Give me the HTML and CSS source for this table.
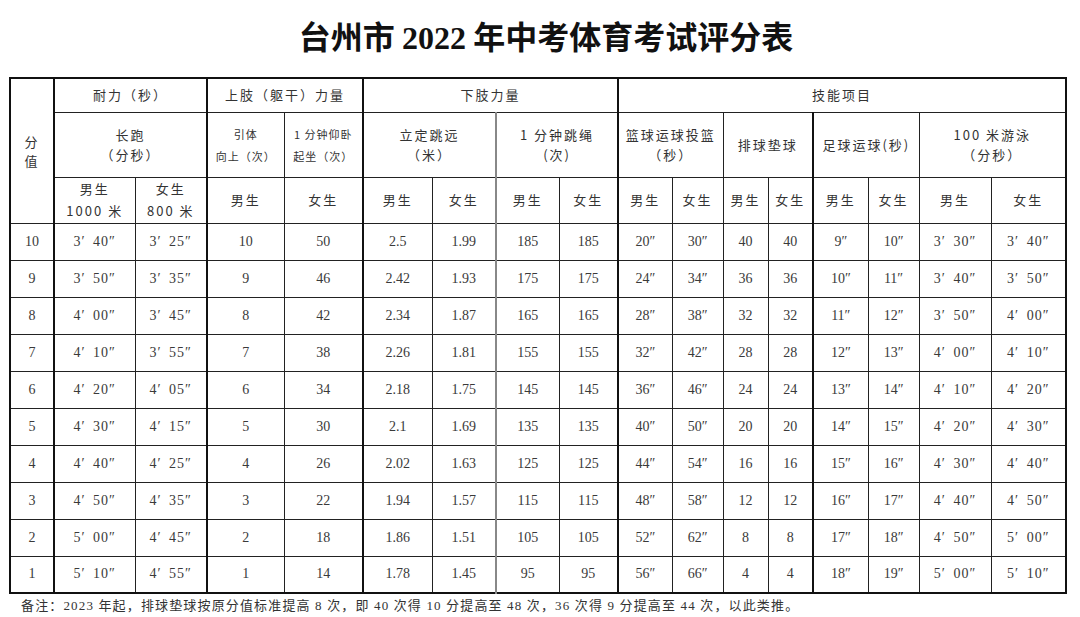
FILE: index.html
```html
<!DOCTYPE html>
<html lang="zh-CN">
<head>
<meta charset="utf-8">
<title>台州市2022年中考体育考试评分表</title>
<link rel="stylesheet" href="styles.css">
</head>
<body>
<div class="page">
  <h1 class="title">台州市 <span class="num">2022</span> 年中考体育考试评分表</h1>
  <table class="score">
    <colgroup>
      <col class="c0"><col class="c1 tk"><col class="c2"><col class="c3 tk"><col class="c4">
      <col class="c5 tk"><col class="c6"><col class="c7 gr"><col class="c8"><col class="c9 tk">
      <col class="c10"><col class="c11"><col class="c12"><col class="c13 tk"><col class="c14">
      <col class="c15"><col class="c16">
    </colgroup>
    <thead>
      <tr class="h1">
        <th rowspan="3" class="fz">分<br>值</th>
        <th colspan="2">耐力（秒）</th>
        <th colspan="2">上肢（躯干）力量</th>
        <th colspan="4">下肢力量</th>
        <th colspan="8">技能项目</th>
      </tr>
      <tr class="h2">
        <th colspan="2">长跑<br>（分秒）</th>
        <th class="sm">引体<br>向上（次）</th>
        <th class="sm">1 分钟仰卧<br>起坐（次）</th>
        <th colspan="2">立定跳远<br>（米）</th>
        <th colspan="2">1 分钟跳绳<br>(次)</th>
        <th colspan="2">篮球运球投篮<br>（秒）</th>
        <th colspan="2">排球垫球</th>
        <th colspan="2">足球运球(秒)</th>
        <th colspan="2">100 米游泳<br>（分秒）</th>
      </tr>
      <tr class="h3">
        <th class="two">男生<br>1000 米</th>
        <th class="two">女生<br>800 米</th>
        <th>男生</th><th>女生</th>
        <th>男生</th><th>女生</th>
        <th>男生</th><th>女生</th>
        <th>男生</th><th>女生</th>
        <th>男生</th><th>女生</th>
        <th>男生</th><th>女生</th>
        <th>男生</th><th>女生</th>
      </tr>
    </thead>
    <tbody>
      <tr><td>10</td><td class="t">3′ 40″</td><td class="t">3′ 25″</td><td>10</td><td>50</td><td>2.5</td><td>1.99</td><td>185</td><td>185</td><td>20″</td><td>30″</td><td>40</td><td>40</td><td>9″</td><td>10″</td><td class="t">3′ 30″</td><td class="t">3′ 40″</td></tr>
      <tr><td>9</td><td class="t">3′ 50″</td><td class="t">3′ 35″</td><td>9</td><td>46</td><td>2.42</td><td>1.93</td><td>175</td><td>175</td><td>24″</td><td>34″</td><td>36</td><td>36</td><td>10″</td><td>11″</td><td class="t">3′ 40″</td><td class="t">3′ 50″</td></tr>
      <tr><td>8</td><td class="t">4′ 00″</td><td class="t">3′ 45″</td><td>8</td><td>42</td><td>2.34</td><td>1.87</td><td>165</td><td>165</td><td>28″</td><td>38″</td><td>32</td><td>32</td><td>11″</td><td>12″</td><td class="t">3′ 50″</td><td class="t">4′ 00″</td></tr>
      <tr><td>7</td><td class="t">4′ 10″</td><td class="t">3′ 55″</td><td>7</td><td>38</td><td>2.26</td><td>1.81</td><td>155</td><td>155</td><td>32″</td><td>42″</td><td>28</td><td>28</td><td>12″</td><td>13″</td><td class="t">4′ 00″</td><td class="t">4′ 10″</td></tr>
      <tr><td>6</td><td class="t">4′ 20″</td><td class="t">4′ 05″</td><td>6</td><td>34</td><td>2.18</td><td>1.75</td><td>145</td><td>145</td><td>36″</td><td>46″</td><td>24</td><td>24</td><td>13″</td><td>14″</td><td class="t">4′ 10″</td><td class="t">4′ 20″</td></tr>
      <tr><td>5</td><td class="t">4′ 30″</td><td class="t">4′ 15″</td><td>5</td><td>30</td><td>2.1</td><td>1.69</td><td>135</td><td>135</td><td>40″</td><td>50″</td><td>20</td><td>20</td><td>14″</td><td>15″</td><td class="t">4′ 20″</td><td class="t">4′ 30″</td></tr>
      <tr><td>4</td><td class="t">4′ 40″</td><td class="t">4′ 25″</td><td>4</td><td>26</td><td>2.02</td><td>1.63</td><td>125</td><td>125</td><td>44″</td><td>54″</td><td>16</td><td>16</td><td>15″</td><td>16″</td><td class="t">4′ 30″</td><td class="t">4′ 40″</td></tr>
      <tr><td>3</td><td class="t">4′ 50″</td><td class="t">4′ 35″</td><td>3</td><td>22</td><td>1.94</td><td>1.57</td><td>115</td><td>115</td><td>48″</td><td>58″</td><td>12</td><td>12</td><td>16″</td><td>17″</td><td class="t">4′ 40″</td><td class="t">4′ 50″</td></tr>
      <tr><td>2</td><td class="t">5′ 00″</td><td class="t">4′ 45″</td><td>2</td><td>18</td><td>1.86</td><td>1.51</td><td>105</td><td>105</td><td>52″</td><td>62″</td><td>8</td><td>8</td><td>17″</td><td>18″</td><td class="t">4′ 50″</td><td class="t">5′ 00″</td></tr>
      <tr><td>1</td><td class="t">5′ 10″</td><td class="t">4′ 55″</td><td>1</td><td>14</td><td>1.78</td><td>1.45</td><td>95</td><td>95</td><td>56″</td><td>66″</td><td>4</td><td>4</td><td>18″</td><td>19″</td><td class="t">5′ 00″</td><td class="t">5′ 10″</td></tr>
    </tbody>
  </table>
  <p class="note">备注：2023 年起，排球垫球按原分值标准提高 8 次，即 40 次得 10 分提高至 48 次，36 次得 9 分提高至 44 次，以此类推。</p>
</div>
</body>
</html>
```
FILE: styles.css
```css
html, body {
  margin: 0;
  padding: 0;
  background: #ffffff;
}

.page {
  width: 1080px;
  height: 617px;
  overflow: hidden;
  font-family: "Liberation Serif", "Noto Sans CJK SC", serif;
  color: #333333;
}

.title {
  margin: 0;
  height: 77px;
  box-sizing: border-box;
  padding-top: 15px;
  padding-left: 12px;
  text-align: center;
  font-family: "Noto Sans CJK SC", sans-serif;
  font-weight: 700;
  font-size: 32px;
  line-height: 40px;
  color: #111111;
  letter-spacing: 0;
}

.title .num {
  font-family: "Liberation Serif", serif;
  font-weight: 700;
}

.score {
  margin-left: 9px;
  width: 1056px;
  table-layout: fixed;
  border-collapse: collapse;
  border: 2px solid #111111;
  font-size: 13px;
}

.score th,
.score td {
  border: 1px solid #222222;
  padding: 0;
  text-align: center;
  vertical-align: middle;
  font-weight: 400;
  overflow: hidden;
  white-space: nowrap;
}

.score col.tk { border-left: 2px solid #111111; }
.score col.gr { border-left: 2px solid #888888; }

.c0 { width: 44px; }
.c1 { width: 81px; }
.c2 { width: 72px; }
.c3 { width: 77px; }
.c4 { width: 79px; }
.c5 { width: 69px; }
.c6 { width: 64px; }
.c7 { width: 63px; }
.c8 { width: 59px; }
.c9 { width: 54px; }
.c10 { width: 51px; }
.c11 { width: 45px; }
.c12 { width: 45px; }
.c13 { width: 55px; }
.c14 { width: 51px; }
.c15 { width: 72px; }
.c16 { width: 75px; }

.score th {
  font-family: "Noto Sans CJK SC", sans-serif;
  letter-spacing: 2px;
  color: #333333;
}

.h1 { height: 34px; }
.h1 th { line-height: 18px; }
.h2 { height: 65px; }
.h2 th { line-height: 20px; }
.h3 { height: 46px; }
.h3 th { line-height: 22px; }

.score th.fz { line-height: 19px; }
.score th.sm {
  font-size: 11px;
  line-height: 22px;
  letter-spacing: 1px;
}

.score tbody tr { height: 37px; }
.score td {
  font-size: 14px;
  line-height: 16px;
  color: #3a3a3a;
}
.score td.t { word-spacing: 3px; letter-spacing: 1px; }

.note {
  margin: 2px 0 0 21px;
  font-family: "Liberation Serif", "Noto Sans CJK SC", serif;
  font-size: 13px;
  line-height: 20px;
  letter-spacing: 1.15px;
  color: #333333;
}
```
